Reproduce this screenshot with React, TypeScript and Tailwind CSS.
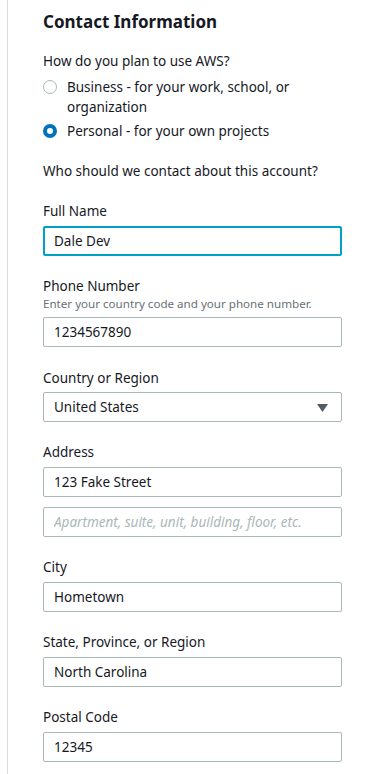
import { useState } from 'react';

const inputBase =
  'block w-full h-[30px] rounded-[2px] border border-[#aab7b8] bg-white pl-[10px] pr-[10px] text-[13.5px] text-[#16191f] outline-none';

function Field({
  label,
  hint,
  value,
  focused,
}: {
  label: string;
  hint?: string;
  value: string;
  focused?: boolean;
}) {
  return (
    <div className="mt-[20px]">
      <div className="text-[13.5px] leading-[20px] text-[#16191f]">{label}</div>
      {hint && <div className="text-[11.6px] leading-[16px] text-[#687078]">{hint}</div>}
      <input
        readOnly
        value={value}
        className={
          focused
            ? 'mt-[5px] block w-full h-[30px] rounded-[2px] border-2 border-[#00a1c9] bg-white pl-[9px] text-[13.5px] text-[#16191f] outline-none'
            : 'mt-[5px] ' + inputBase
        }
      />
    </div>
  );
}

function Radio({ checked, children }: { checked: boolean; children: React.ReactNode }) {
  return (
    <label className="flex items-start gap-[10px] text-[13.5px] leading-[20px] text-[#16191f]">
      <span
        className={
          checked
            ? 'mt-[3px] h-[14px] w-[14px] shrink-0 rounded-full border-[4px] border-[#0073bb] bg-white'
            : 'mt-[3px] h-[14px] w-[14px] shrink-0 rounded-full border border-[#aab7b8] bg-white'
        }
      />
      <span>{children}</span>
    </label>
  );
}

export default function App() {
  const [usage] = useState<'business' | 'personal'>('personal');

  return (
    <div className="min-h-screen bg-white font-['Noto_Sans','Open_Sans',sans-serif]">
      <div className="ml-[7px] min-h-screen border-l border-[#d5dbdb] pl-[35px] pr-[30px] pt-[10px] pb-[20px]">
        <h2 className="text-[17px] font-bold leading-[24px] text-[#16191f]">Contact Information</h2>

        <div className="mt-[17px] text-[13.5px] leading-[20px] text-[#16191f]">How do you plan to use AWS?</div>
        <div className="mt-[6px] flex flex-col gap-[4px]">
          <Radio checked={usage === 'business'}>Business - for your work, school, or organization</Radio>
          <Radio checked={usage === 'personal'}>Personal - for your own projects</Radio>
        </div>

        <div className="mt-[20px] text-[13.5px] leading-[20px] text-[#16191f]">
          Who should we contact about this account?
        </div>

        <Field label="Full Name" value="Dale Dev" focused />
        <Field
          label="Phone Number"
          hint="Enter your country code and your phone number."
          value="1234567890"
        />

        <div className="mt-[21px]">
          <div className="text-[13.5px] leading-[20px] text-[#16191f]">Country or Region</div>
          <div className="relative mt-[4px]">
            <div className={inputBase + ' flex items-center'}>United States</div>
            <svg
              className="absolute right-[14px] top-[12px]"
              width="11"
              height="8"
              viewBox="0 0 11 8"
            >
              <path d="M0 0 H11 L5.5 8 Z" fill="#545b64" />
            </svg>
          </div>
        </div>

        <div className="mt-[20px]">
          <div className="text-[13.5px] leading-[20px] text-[#16191f]">Address</div>
          <input readOnly value="123 Fake Street" className={'mt-[5px] ' + inputBase} />
          <input
            readOnly
            placeholder="Apartment, suite, unit, building, floor, etc."
            className={'mt-[10px] placeholder:italic placeholder:text-[#aab7b8] ' + inputBase}
          />
        </div>

        <Field label="City" value="Hometown" />
        <Field label="State, Province, or Region" value="North Carolina" />
        <Field label="Postal Code" value="12345" />
      </div>
    </div>
  );
}
